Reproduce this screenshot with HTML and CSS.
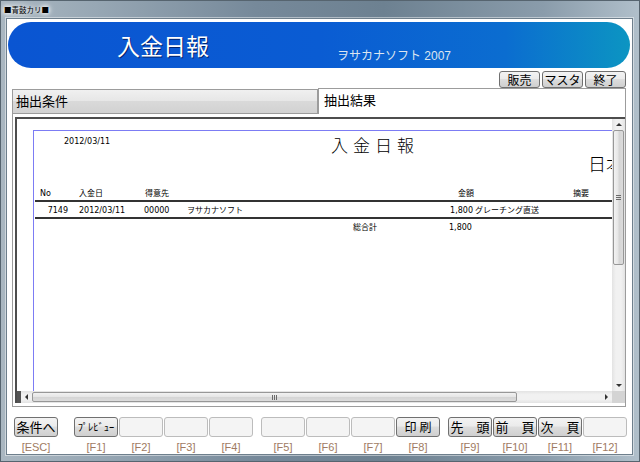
FILE: index.html
```html
<!DOCTYPE html>
<html lang="ja">
<head>
    <meta charset="UTF-8" />
    <title>入金日報</title>
    <link rel="stylesheet" href="styles.css">
</head>
<body>
<div class="window">
    <div class="titlebar">■青鼓カリ■</div>
    <div class="client">
        <div class="banner">
            <span class="banner-title">入金日報</span>
            <span class="banner-sub">ヲサカナソフト 2007</span>
        </div>

        <div class="toolbar">
            <button class="btn tool">販売</button>
            <button class="btn tool">マスタ</button>
            <button class="btn tool">終了</button>
        </div>

        <div class="tabs">
            <div class="tab">抽出条件</div>
            <div class="tab active">抽出結果</div>
        </div>

        <div class="panel">
            <div class="viewer">
                <div class="view-area">
                    <div class="page">
                        <div class="rep-head">
                            <span class="rep-date">2012/03/11</span>
                            <span class="rep-title">入金日報</span>
                            <span class="rep-company">日本</span>
                        </div>
                        <div class="rep-row rep-cols">
                            <span class="c-no">No</span>
                            <span class="c-date">入金日</span>
                            <span class="c-cust">得意先</span>
                            <span class="c-amt">金額</span>
                            <span>摘要</span>
                        </div>
                        <div class="rep-row rep-data">
                            <span class="d-no">7149</span>
                            <span class="d-date">2012/03/11</span>
                            <span class="d-code">00000</span>
                            <span class="d-name">ヲサカナソフト</span>
                            <span class="d-amt">1,800</span>
                            <span class="d-memo">グレーチング直送</span>
                        </div>
                        <div class="rep-row rep-total">
                            <span class="t-label">総合計</span>
                            <span>1,800</span>
                        </div>
                    </div>
                </div>
                <div class="vscroll">
                    <div class="arrow up"></div>
                    <div class="vthumb"></div>
                    <div class="track"></div>
                    <div class="arrow down"></div>
                </div>
                <div class="hscroll">
                    <div class="lead"></div>
                    <div class="arrow left"></div>
                    <div class="hthumb"></div>
                    <div class="track"></div>
                    <div class="arrow right"></div>
                </div>
                <div class="corner"></div>
            </div>
        </div>

        <div class="fkeys">
            <div class="group">
                <div class="key"><button class="btn">条件へ</button><span class="key-label">[ESC]</span></div>
            </div>
            <div class="group g1">
                <div class="key"><button class="btn small">ﾌﾟﾚﾋﾞｭｰ</button><span class="key-label">[F1]</span></div>
                <div class="key"><button class="btn empty"></button><span class="key-label">[F2]</span></div>
                <div class="key"><button class="btn empty"></button><span class="key-label">[F3]</span></div>
                <div class="key"><button class="btn empty"></button><span class="key-label">[F4]</span></div>
            </div>
            <div class="group g2">
                <div class="key"><button class="btn empty"></button><span class="key-label">[F5]</span></div>
                <div class="key"><button class="btn empty"></button><span class="key-label">[F6]</span></div>
                <div class="key"><button class="btn empty"></button><span class="key-label">[F7]</span></div>
                <div class="key"><button class="btn spaced">印刷</button><span class="key-label">[F8]</span></div>
            </div>
            <div class="group g3">
                <div class="key"><button class="btn">先　頭</button><span class="key-label">[F9]</span></div>
                <div class="key"><button class="btn">前　頁</button><span class="key-label">[F10]</span></div>
                <div class="key"><button class="btn">次　頁</button><span class="key-label">[F11]</span></div>
                <div class="key"><button class="btn empty"></button><span class="key-label">[F12]</span></div>
            </div>
        </div>
    </div>
</div>
</body>
</html>
```

FILE: styles.css
```css
body {
    margin: 0;
    font-family: "Liberation Sans", "Noto Sans CJK JP", sans-serif;
    color: #000;
}

.window {
    width: 640px;
    height: 462px;
    box-sizing: border-box;
    border: 1px solid #56646f;
    display: flex;
    flex-direction: column;
    background: linear-gradient(90deg, #aab7c1 0%, #97a7b4 15%, #76899a 40%, #6d8191 60%, #8a9cab 85%, #b0bfca 100%);
}

.titlebar {
    height: 17px;
    padding-left: 3px;
    font-family: "Noto Sans CJK JP", sans-serif;
    font-size: 7.5px;
    line-height: 17px;
    text-shadow: 0 0 4px #fff, 0 0 6px #fff;
}

.client {
    flex: 1;
    margin: 0 6px 6px 5px;
    border: 1px solid #6e7f8c;
    box-shadow: 0 0 0 1px rgba(255,255,255,0.45);
    background: #fff;
    display: flex;
    flex-direction: column;
}

/* header banner */
.banner {
    height: 46px;
    margin: 3px 2px 0 1px;
    border-radius: 23px;
    background: linear-gradient(90deg, #0a55d2 0%, #0a5cd3 50%, #0b6dd0 80%, #0c95c2 100%);
    display: flex;
    align-items: center;
    color: #fff;
}

.banner-title {
    padding-left: 109px;
    font-family: "Noto Sans CJK JP", sans-serif;
    font-size: 23px;
    line-height: 28px;
    text-shadow: 1px 1px 0 #00236e;
}

.banner-sub {
    margin-left: 128px;
    align-self: flex-end;
    margin-bottom: 5px;
    font-size: 12px;
    line-height: 14px;
    color: #dde6f0;
}

/* buttons */
.btn {
    font-family: "Noto Sans CJK JP", "Liberation Sans", sans-serif;
    padding: 0;
    border: 1px solid #707070;
    border-radius: 3px;
    background: linear-gradient(#f3f3f3, #ebebeb 45%, #dddddd 50%, #cfcfcf);
    color: #000;
    white-space: nowrap;
}

.toolbar {
    display: flex;
    justify-content: flex-end;
    gap: 2px;
    margin-top: 3px;
    padding-right: 6px;
}

.tool {
    width: 41px;
    height: 17px;
    font-size: 12px;
    line-height: 15px;
}

/* tabs */
.tabs {
    display: flex;
    align-items: flex-end;
    height: 25px;
    margin: 0 6px 0 5px;
}

.tab {
    box-sizing: border-box;
    width: 306px;
    height: 24px;
    border: 1px solid #9c9c9c;
    border-bottom: none;
    background: linear-gradient(#f0f0f0, #e6e6e6 50%, #d9d9d9 50%, #d2d2d2);
    font-family: "Noto Sans CJK JP", sans-serif;
    font-size: 13px;
    line-height: 22px;
    padding-left: 3px;
}

.tab.active {
    flex: 1;
    width: auto;
    height: 26px;
    margin-bottom: -1px;
    background: #fff;
    padding-left: 5px;
    line-height: 21px;
    position: relative;
    z-index: 1;
}

.panel {
    box-sizing: border-box;
    height: 294px;
    margin: 0 6px 0 5px;
    border: 1px solid #9c9c9c;
    padding: 3px 0 3px 2px;
    display: flex;
}

.viewer {
    flex: 1;
    display: grid;
    grid-template-columns: 1fr 13px;
    grid-template-rows: 1fr 12px;
    border-top: 2px solid #4d4d4d;
    border-left: 2px solid #4d4d4d;
}

.view-area {
    overflow: hidden;
    background: #fff;
}

/* report page */
.page {
    width: 760px;
    height: 300px;
    margin: 11px 0 0 16px;
    border-top: 1px solid #7c7cf4;
    border-left: 1px solid #7c7cf4;
    font-family: "DejaVu Sans", "Noto Sans CJK JP", sans-serif;
    font-size: 8px;
    line-height: 10px;
    white-space: nowrap;
}

.rep-head {
    height: 57px;
    display: flex;
    align-items: flex-start;
}

.rep-date {
    margin: 6px 0 0 30px;
    width: 267px;
}

.rep-title {
    width: 257px;
    margin-top: 4px;
    font-family: "Noto Sans CJK JP", sans-serif;
    font-weight: 300;
    font-size: 17px;
    line-height: 20px;
    letter-spacing: 5px;
}

.rep-company {
    margin-top: 22px;
    font-family: "Noto Sans CJK JP", sans-serif;
    font-weight: 300;
    font-size: 18px;
    line-height: 20px;
}

.rep-row {
    display: flex;
    margin-left: 1px;
}

.rep-row span {
    flex-shrink: 0;
}

.rep-cols {
    height: 12px;
    line-height: 12px;
    padding-left: 5px;
    border-bottom: 2px solid #333;
}

.c-no { width: 39px; }
.c-date { width: 66px; }
.c-cust { width: 313px; }
.c-amt { width: 115px; }

.rep-data {
    height: 11px;
    padding-top: 4px;
    border-bottom: 2px solid #333;
}

.d-no { width: 33px; text-align: right; }
.d-date { width: 65px; margin-left: 11px; }
.d-code { width: 43px; }
.d-name { width: 247px; }
.d-amt { width: 39px; text-align: right; }
.d-memo { margin-left: 2px; }

.rep-total {
    padding: 4px 0 0 318px;
}

.t-label { width: 96px; }

/* scrollbars */
.vscroll {
    display: flex;
    flex-direction: column;
    background: linear-gradient(90deg, #e3e3e3, #f1f1f1 30%, #f1f1f1 70%, #e3e3e3);
}

.hscroll {
    display: flex;
    background: linear-gradient(#e3e3e3, #f1f1f1 30%, #f1f1f1 70%, #e3e3e3);
}

.track {
    flex: 1;
}

.arrow {
    flex-shrink: 0;
    display: flex;
    align-items: center;
    justify-content: center;
}

.arrow.up, .arrow.down { height: 11px; }
.arrow.left, .arrow.right { width: 11px; }

.arrow::before {
    content: "";
    border: 3px solid transparent;
}

.arrow.up::before { border-top: none; border-bottom-color: #333; }
.arrow.down::before { border-bottom: none; border-top-color: #333; }
.arrow.left::before { border-left: none; border-right-color: #333; }
.arrow.right::before { border-right: none; border-left-color: #333; }

.vthumb {
    box-sizing: border-box;
    height: 135px;
    margin: 0 1px;
    border: 1px solid #979797;
    border-radius: 2px;
    background: linear-gradient(90deg, #f2f2f2, #e6e6e6 45%, #d5d5d5 55%, #dcdcdc);
    display: flex;
    align-items: center;
    justify-content: center;
}

.vthumb::before {
    content: "";
    width: 5px;
    height: 6px;
    background: repeating-linear-gradient(#6a6a6a 0 1px, transparent 1px 2px);
}

.hscroll .lead {
    width: 4px;
    background: #555;
}

.hthumb {
    box-sizing: border-box;
    width: 485px;
    margin: 1px 0;
    border: 1px solid #979797;
    border-radius: 2px;
    background: linear-gradient(#f2f2f2, #e6e6e6 45%, #d5d5d5 55%, #dcdcdc);
    display: flex;
    align-items: center;
    justify-content: center;
}

.hthumb::before {
    content: "";
    width: 6px;
    height: 5px;
    background: repeating-linear-gradient(90deg, #6a6a6a 0 1px, transparent 1px 2px);
}

.corner {
    background: #d4d4d4;
}

/* function keys */
.fkeys {
    display: flex;
    margin: 10px 0 0 7px;
}

.group {
    display: flex;
    gap: 1px;
}

.g1 { margin-left: 16px; }
.g2 { margin-left: 8px; }
.g3 { margin-left: 8px; }

.key {
    width: 44px;
    display: flex;
    flex-direction: column;
    align-items: center;
}

.key .btn {
    width: 44px;
    height: 20px;
    font-size: 13px;
    line-height: 18px;
}

.key .btn.small {
    font-size: 10.5px;
}

.key .btn.spaced {
    letter-spacing: 3px;
    padding-left: 3px;
    font-size: 12px;
}

.key .btn.empty {
    border-color: #bcbcbc;
    background: #f4f4f4;
}

.key-label {
    margin-top: 4px;
    font-size: 11px;
    line-height: 13px;
    color: #a07a62;
}
```
